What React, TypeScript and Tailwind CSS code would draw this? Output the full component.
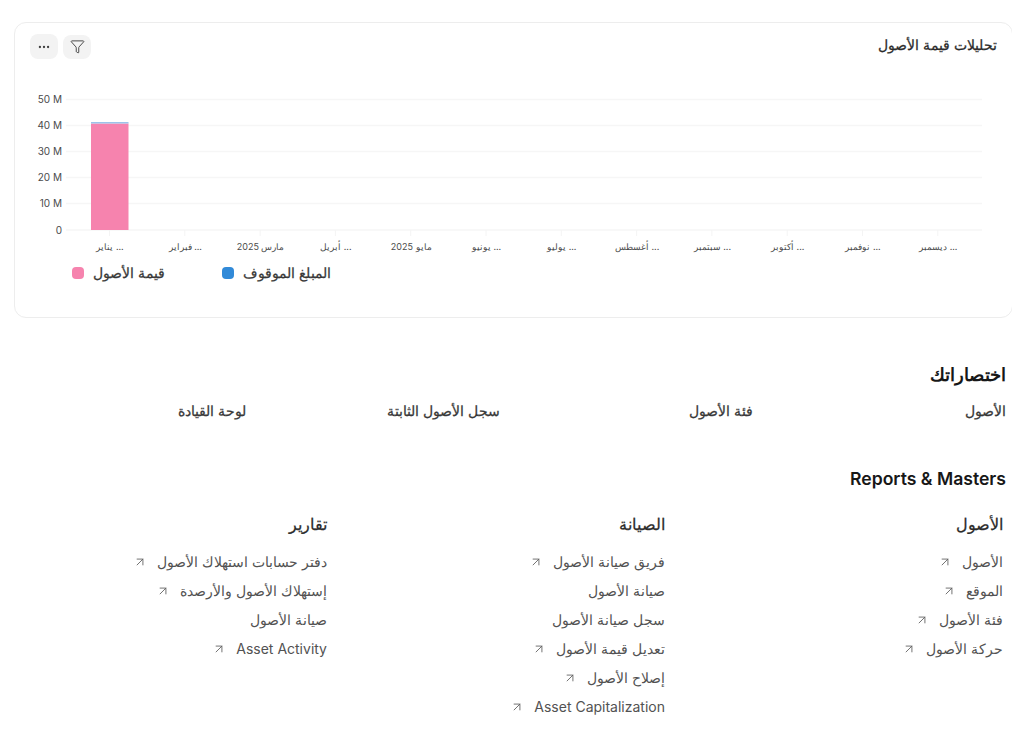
import { ArrowUpRight, Ellipsis, Filter } from 'lucide-react';

const months = ['يناير ...', 'فبراير ...', 'مارس 2025', 'أبريل ...', 'مايو 2025', 'يونيو ...', 'يوليو ...', 'أغسطس ...', 'سبتمبر ...', 'أكتوبر ...', 'نوفمبر ...', 'ديسمبر ...'];
const yTicks = [
  { label: '50 M', y: 99.5 },
  { label: '40 M', y: 125.5 },
  { label: '30 M', y: 151.5 },
  { label: '20 M', y: 177.5 },
  { label: '10 M', y: 203.5 },
  { label: '0', y: 230 },
];

const shortcuts = ['الأصول', 'فئة الأصول', 'سجل الأصول الثابتة', 'لوحة القيادة'];

const reports = [
  {
    title: 'الأصول',
    links: [
      { label: 'الأصول', arrow: true },
      { label: 'الموقع', arrow: true },
      { label: 'فئة الأصول', arrow: true },
      { label: 'حركة الأصول', arrow: true },
    ],
  },
  {
    title: 'الصيانة',
    links: [
      { label: 'فريق صيانة الأصول', arrow: true },
      { label: 'صيانة الأصول', arrow: false },
      { label: 'سجل صيانة الأصول', arrow: false },
      { label: 'تعديل قيمة الأصول', arrow: true },
      { label: 'إصلاح الأصول', arrow: true },
      { label: 'Asset Capitalization', arrow: true },
    ],
  },
  {
    title: 'تقارير',
    links: [
      { label: 'دفتر حسابات استهلاك الأصول', arrow: true },
      { label: 'إستهلاك الأصول والأرصدة', arrow: true },
      { label: 'صيانة الأصول', arrow: false },
      { label: 'Asset Activity', arrow: true },
    ],
  },
];

function Chart() {
  // svg origin sits at the card's inner left edge (x=15, y=80 on the page)
  return (
    <svg width="997" height="178" viewBox="15 80 997 178" className="block">
      {yTicks.map((t) => (
        <g key={t.label}>
          <line x1="66" x2="982" y1={t.y} y2={t.y} stroke="#f6f6f6" strokeWidth="1.5" />
          <text x="62" y={t.y + 3.5} textAnchor="end" direction="ltr" fontSize="10" fill="#4b4b4b">
            {t.label}
          </text>
        </g>
      ))}
      {months.map((m, i) => {
        const x = 109.5 + i * 75.3;
        return (
          <g key={m}>
            <line x1={x} x2={x} y1="230" y2="236" stroke="#f4f4f4" strokeWidth="1" />
            <text x={x + 0.5} y="250" textAnchor="middle" direction="ltr" fontSize="9" fill="#4b4b4b">
              {m}
            </text>
          </g>
        );
      })}
      <rect x="91" y="123.5" width="37.5" height="106.5" fill="#f683ae" />
      <rect x="91" y="122" width="37.5" height="1.5" fill="#9cc3ea" />
    </svg>
  );
}

export default function App() {
  return (
    <div dir="rtl" className="w-[1012px] h-[733px] overflow-hidden bg-white text-[#383838] font-['Inter','Noto_Sans',sans-serif]">
      <div className="ml-[14px] mr-[-1px] mt-[22px] h-[296px] rounded-xl border border-[#ededed] pt-[11px]">
        <div className="flex items-start justify-between pl-[15px] pr-[15px]">
          <h3 className="text-sm [-webkit-text-stroke:0.25px] text-[#2b2b2b] mt-[1px]">تحليلات قيمة الأصول</h3>
          <div className="flex items-center gap-[5px]">
            <button className="flex h-6 w-7 items-center justify-center rounded-lg bg-[#f3f3f3] text-[#404040]">
              <Filter size={15} strokeWidth={1.5} />
            </button>
            <button className="flex h-[25px] w-7 items-center justify-center rounded-lg bg-[#f3f3f3] text-[#404040]">
              <Ellipsis size={14} strokeWidth={2} />
            </button>
          </div>
        </div>
        <div className="mt-[21px]">
          <div dir="ltr">
            <Chart />
          </div>
          <div dir="ltr" className="flex items-center pl-[57px] mt-[5px] text-sm [-webkit-text-stroke:0.25px] text-[#383838]">
            <span className="flex w-[150px] items-center gap-[9px]">
              <span className="h-3 w-3 rounded-[4px] bg-[#f683ae]" />
              <span>قيمة الأصول</span>
            </span>
            <span className="flex items-center gap-[9px]">
              <span className="h-3 w-3 rounded-[4px] bg-[#318ad8]" />
              <span>المبلغ الموقوف</span>
            </span>
          </div>
        </div>
      </div>

      <div className="pr-[6px] pl-[14px]">
        <h2 className="mt-[45px] text-[17.6px] font-semibold leading-[24px] text-[#171717]">اختصاراتك</h2>
        <div className="mt-[14px] grid grid-cols-4 gap-[21px]">
          {shortcuts.map((s) => (
            <span key={s} className="text-sm [-webkit-text-stroke:0.25px] leading-5 text-[#383838]">{s}</span>
          ))}
        </div>

        <h2 className="mt-[46px] text-[17.6px] font-semibold leading-[24px] text-[#171717]">Reports &amp; Masters</h2>
        <div className="mt-[21px] grid grid-cols-3 gap-[25px] pr-[3px]">
          {reports.map((col) => (
            <div key={col.title}>
              <h3 className="text-base [-webkit-text-stroke:0.25px] leading-6 text-[#2b2b2b]">{col.title}</h3>
              <ul className="mt-[11px] flex flex-col">
                {col.links.map((l) => (
                  <li key={l.label} className="flex h-[29px] items-center gap-[10px] text-sm text-[#525252]">
                    <span>{l.label}</span>
                    {l.arrow && <ArrowUpRight size={14} strokeWidth={1.5} className="text-[#5f5f5f]" />}
                  </li>
                ))}
              </ul>
            </div>
          ))}
        </div>
      </div>
    </div>
  );
}
